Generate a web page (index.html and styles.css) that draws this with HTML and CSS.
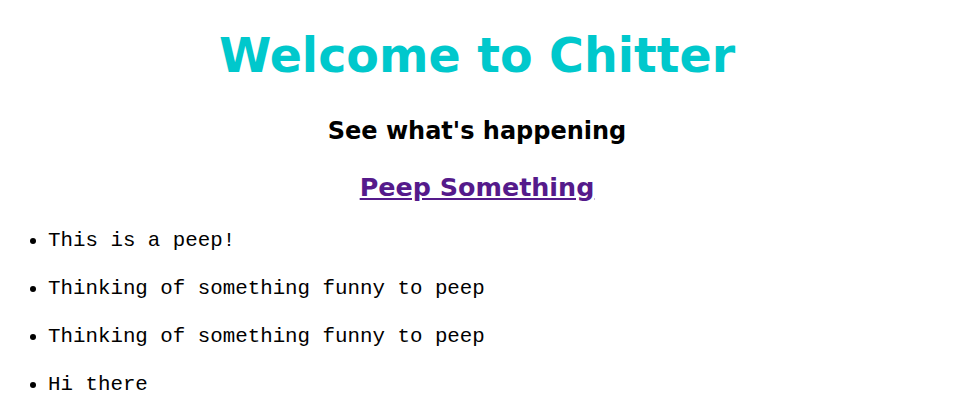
FILE: index.html
```html
<!DOCTYPE html>
<html>
<head>
<meta charset="utf-8">
<link rel="stylesheet" href="styles.css">
</head>
<body>
<h1 class="title">Welcome to Chitter</h1>
<h3 class="subtitle">See what's happening</h3>
<h3 class="action"><a class="peep-link" href="#">Peep Something</a></h3>
<ul class="peeps">
<li class="peep">This is a peep!</li>
<li class="peep">Thinking of something funny to peep</li>
<li class="peep">Thinking of something funny to peep</li>
<li class="peep">Hi there</li>
</ul>
</body>
</html>
```
FILE: styles.css
```css
body {
  margin: 0 8px;
  font-family: "DejaVu Sans", Verdana, sans-serif;
  background: #fff;
  color: #000;
}
.title {
  text-align: center;
  color: #00c8cc;
  font-size: 47.5px;
  margin: 28px 0 0;
}
.subtitle {
  text-align: center;
  font-size: 24px;
  margin: 34px 0 0;
}
.action {
  text-align: center;
  font-size: 25.4px;
  margin: 27px 0 0;
}
.peep-link {
  color: #551a8b;
}
.peeps {
  font-family: "Liberation Mono", "Courier New", monospace;
  font-size: 20.8px;
  margin: 27px 0 0;
  padding-left: 40px;
}
.peep {
  line-height: 24px;
  margin-bottom: 24px;
}
.peep:last-child {
  margin-bottom: 0;
}
```
